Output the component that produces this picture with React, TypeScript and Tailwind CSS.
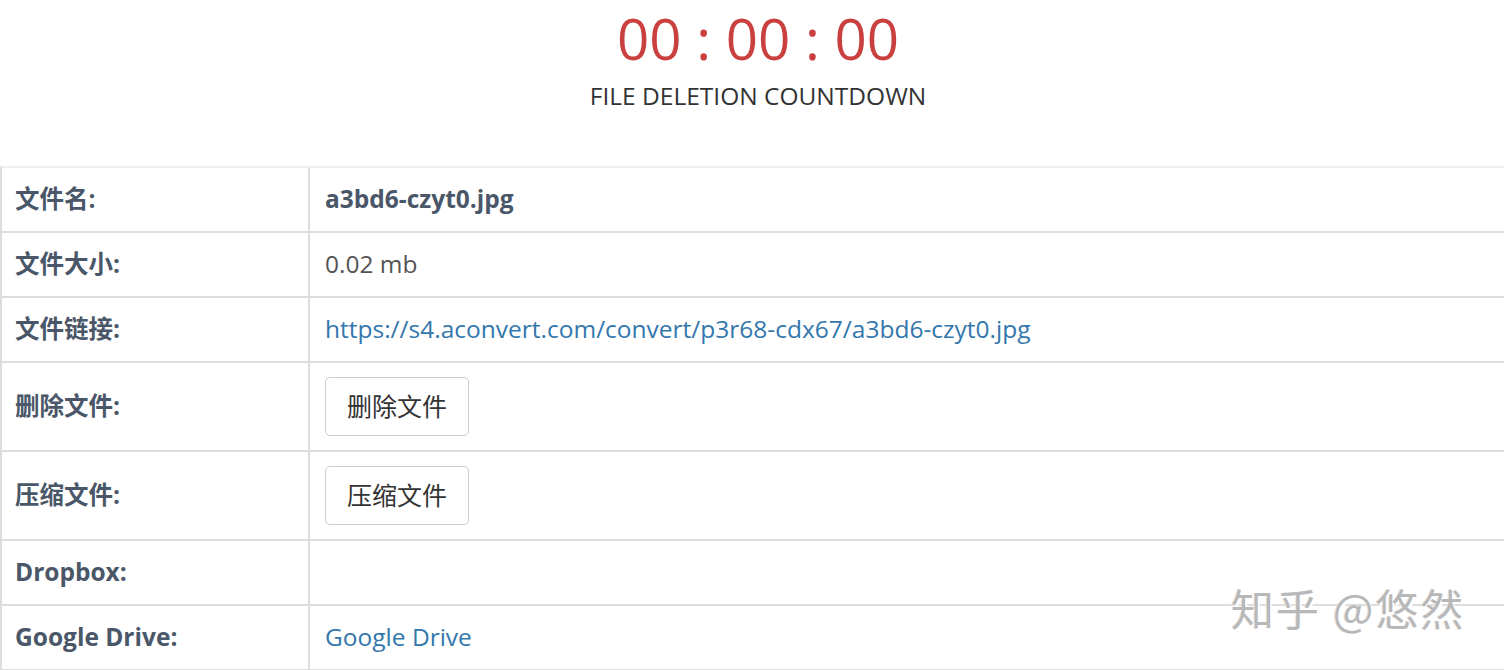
import React from "react";

const font = { fontFamily: '"Open Sans", "Noto Sans CJK SC", sans-serif' };

function Row({ label, children, tall }: { label: string; children?: React.ReactNode; tall?: boolean }) {
  return (
    <div className={`grid grid-cols-[308px_1fr] border-b-2 border-[#dddddd] ${tall ? "h-[89px]" : "h-[65px]"}`}>
      <div className="flex items-center border-r-2 border-[#dddddd] pl-[13px] text-[24.5px] font-bold text-[#4a5769]">
        {label}
      </div>
      <div className="flex items-center pl-[15px] text-[24.5px] text-[#555555]">{children}</div>
    </div>
  );
}

function Btn({ children }: { children: React.ReactNode }) {
  return (
    <button className="h-[59px] w-[144px] rounded-[5px] border border-[#cccccc] bg-white text-[25px] text-[#333333]">
      {children}
    </button>
  );
}

export default function App() {
  return (
    <div className="relative h-[670px] w-[1504px] overflow-hidden bg-white" style={font}>
      <div className="flex flex-col items-center pl-[12px] pt-[1px]">
        <div className="text-[56.5px] leading-[76px] text-[#c9403f]">00 : 00 : 00</div>
        <div className="mt-[2px] text-[24.5px] leading-[34px] text-[#333333]">FILE DELETION COUNTDOWN</div>
      </div>
      <div className="mt-[53px] border-l-2 border-t-2 border-[#dddddd] border-t-[#eeeeee]">
        <Row label="文件名:">
          <span className="font-bold text-[#4a5769]">a3bd6-czyt0.jpg</span>
        </Row>
        <Row label="文件大小:">0.02 mb</Row>
        <Row label="文件链接:">
          <a className="text-[#3377ad]">https://s4.aconvert.com/convert/p3r68-cdx67/a3bd6-czyt0.jpg</a>
        </Row>
        <Row label="删除文件:" tall>
          <Btn>删除文件</Btn>
        </Row>
        <Row label="压缩文件:" tall>
          <Btn>压缩文件</Btn>
        </Row>
        <Row label="Dropbox:" />
        <Row label="Google Drive:">
          <a className="text-[#3377ad]">Google Drive</a>
        </Row>
      </div>
      <div
        className="absolute left-[1231px] top-[579px] text-[43px] leading-[56px] tracking-[2px] text-[#b8b8b8]"
        style={{ fontFamily: '"Noto Sans CJK SC", sans-serif', textShadow: "2px 2px 0 #ffffff, -1px 0 0 #e8e8e8" }}
      >
        知乎 @悠然
      </div>
    </div>
  );
}
